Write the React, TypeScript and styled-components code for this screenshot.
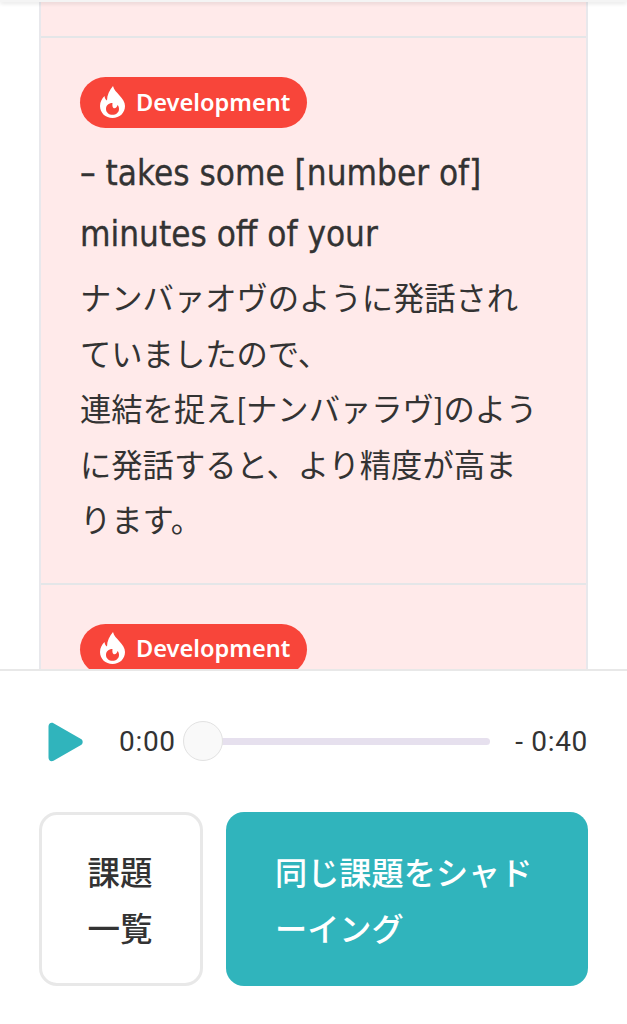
import React from "react";
import styled, { createGlobalStyle } from "styled-components";

const GlobalStyle = createGlobalStyle`
  html, body {
    margin: 0;
    padding: 0;
    background: #fff;
    overflow: hidden;
  }
  body {
    font-family: "Roboto", "Noto Sans CJK JP", sans-serif;
  }
`;

const Page = styled.div`
  display: flex;
  flex-direction: column;
  width: 627px;
  height: 1024px;
  overflow: hidden;
`;

const TopEdge = styled.div`
  flex: none;
  height: 2px;
  background: #f4f4f4;
  box-shadow: 0 1px 4px rgba(0, 0, 0, 0.18);
  position: relative;
  z-index: 1;
`;

const Scroller = styled.div`
  flex: none;
  height: 667px;
  padding: 0 39px;
  overflow: hidden;
`;

const List = styled.div`
  border-left: 2px solid #e8e8ec;
  border-right: 2px solid #e8e8ec;
  background: #ffeaea;
`;

const CardStub = styled.div`
  height: 34px;
  border-bottom: 2px solid #e4e6e8;
`;

const Card = styled.div`
  padding: 39px 39px 34px;
  border-bottom: 2px solid #e4e6e8;
`;

const Pill = styled.div`
  display: inline-flex;
  align-items: center;
  box-sizing: border-box;
  height: 51px;
  padding: 0 17px 2px 20px;
  gap: 11px;
  border-radius: 26px;
  background: #f8453a;
  color: #fff;
  font-family: "Noto Sans", sans-serif;
  font-size: 23.6px;
  font-weight: 600;
`;

const Title = styled.div`
  margin-top: 15px;
  color: #333;
  font-family: "DejaVu Sans", "Noto Sans", sans-serif;
  font-stretch: condensed;
  font-size: 34.8px;
  line-height: 61px;
  -webkit-text-stroke: 0.3px #333;
`;

const Body = styled.div`
  margin-top: 6px;
  color: #333;
  font-family: "Lato", "Noto Sans CJK JP", sans-serif;
  font-size: 31.3px;
  line-height: 55.5px;
`;

const Footer = styled.div`
  flex: 1;
  display: flex;
  flex-direction: column;
  padding: 0 39px;
  background: #fff;
  border-top: 2px solid #e8e8e8;
`;

const Player = styled.div`
  display: flex;
  align-items: center;
  height: 141px;
`;

const PlayButton = styled.div`
  display: flex;
  box-sizing: border-box;
  width: 80px;
  padding-left: 9px;
  margin-left: -1px;
  margin-right: 1px;
  flex: none;
`;

const Time = styled.div`
  flex: none;
  color: #333;
  font-family: "Roboto", sans-serif;
  font-size: 28px;
  letter-spacing: 0.7px;
`;

const Track = styled.div`
  position: relative;
  flex: 1;
  height: 7px;
  margin: 0 25px 0 27px;
  border-radius: 4px;
  background: #e6e0ee;
`;

const Thumb = styled.div`
  position: absolute;
  left: -20px;
  top: -17px;
  width: 40px;
  height: 40px;
  box-sizing: border-box;
  border: 1px solid #e2e2e2;
  border-radius: 50%;
  background: #f9f9f9;
`;

const Actions = styled.div`
  display: flex;
  gap: 23px;
  height: 174px;
`;

const ListButton = styled.div`
  flex: none;
  display: flex;
  align-items: center;
  justify-content: center;
  box-sizing: border-box;
  width: 164px;
  padding-right: 2px;
  border: 3px solid #e8e8e8;
  border-radius: 18px;
  color: #333;
  font-family: "Noto Sans CJK JP", sans-serif;
  font-size: 32.5px;
  font-weight: 500;
  line-height: 56px;
  text-align: center;
`;

const RepeatButton = styled.div`
  flex: 1;
  display: flex;
  align-items: center;
  box-sizing: border-box;
  padding: 0 49px;
  border-radius: 18px;
  background: #30b4bc;
  color: #fff;
  font-family: "Noto Sans CJK JP", sans-serif;
  font-size: 32.2px;
  font-weight: 500;
  line-height: 56px;
`;

const Flame = () => (
  <svg width="25" height="32" viewBox="0 0 25 32" fill="#fff">
    <path
      fillRule="evenodd"
      d="M13 0c1 4 3.500 6 6.500 9.500C22.500 13 25 16 25 20c0 7-5.500 12-12.500 12S0 27 0 20c0-4 2-7.500 4.500-10 .3 2 1 3.500 2.500 4.500C7 9 9.500 4 13 0zM12.500 17c-4 0-6.500 2.500-6.500 6 0 3.500 3 5.800 6.500 5.800S19 26.500 19 23c0-1.500-.5-3-1.500-4-.3 2-1.500 3.200-3 3.200-1.500 0-2.500-1.500-2-5.200z"
    />
  </svg>
);

const PlayIcon = () => (
  <svg width="37" height="40" viewBox="0 0 36 40" fill="#30b4bc">
    <path d="M1 4.500C1 1.500 3.500 0 6 1.300L33.500 17c2.300 1.300 2.300 4.700 0 6L6 38.700C3.500 40 1 38.500 1 35.500z" />
  </svg>
);

const DevPill = () => (
  <Pill>
    <Flame />
    Development
  </Pill>
);

export default function App() {
  return (
    <Page>
      <GlobalStyle />
      <TopEdge />
      <Scroller>
        <List>
          <CardStub />
          <Card>
            <DevPill />
            <Title>
              – takes some [number of]
              <br />
              minutes off of your
            </Title>
            <Body>
              ナンバァオヴのように発話され
              <br />
              ていましたので、
              <br />
              連結を捉え[ナンバァラヴ]のよう
              <br />
              に発話すると、より精度が高ま
              <br />
              ります。
            </Body>
          </Card>
          <Card>
            <DevPill />
          </Card>
        </List>
      </Scroller>
      <Footer>
        <Player>
          <PlayButton>
            <PlayIcon />
          </PlayButton>
          <Time>0:00</Time>
          <Track>
            <Thumb />
          </Track>
          <Time>- 0:40</Time>
        </Player>
        <Actions>
          <ListButton>
            課題
            <br />
            一覧
          </ListButton>
          <RepeatButton>同じ課題をシャドーイング</RepeatButton>
        </Actions>
      </Footer>
    </Page>
  );
}
